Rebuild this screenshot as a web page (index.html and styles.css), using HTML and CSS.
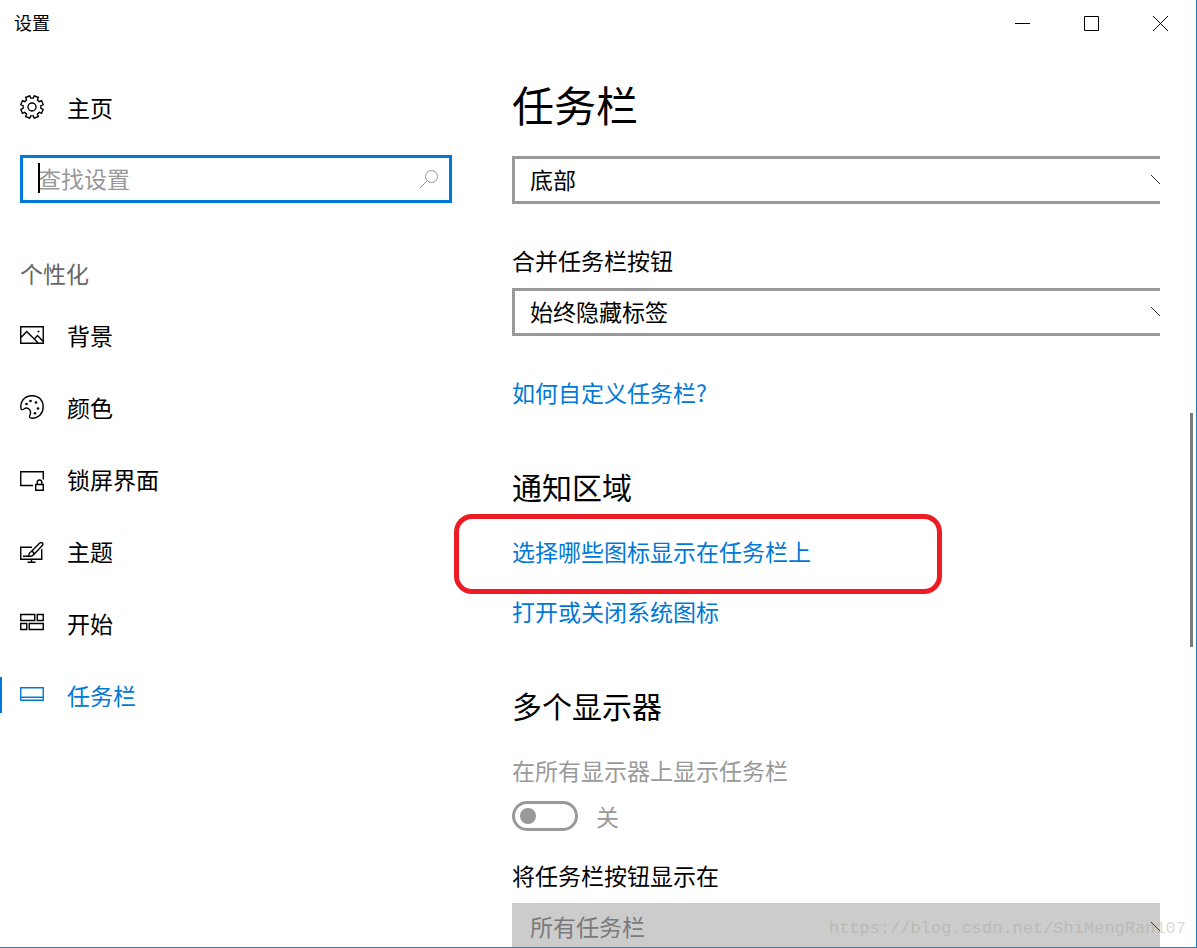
FILE: index.html
```html
<!DOCTYPE html>
<html lang="zh-CN">
<head>
	<meta charset="UTF-8">
	<meta name="viewport" content="width=device-width, initial-scale=1">
	<title>设置</title>
	<link rel="stylesheet" href="styles.css">
</head>
<body>
<div class="window">
	<header class="titlebar">
		<span class="titlebar-text">设置</span>
		<div class="window-buttons">
			<button type="button" aria-label="最小化">
				<svg width="15" height="15" viewBox="0 0 15 15"><path d="M0 7.5h15"/></svg>
			</button>
			<button type="button" aria-label="最大化">
				<svg width="15" height="15" viewBox="0 0 15 15"><path d="M.5 .5h14v14H.5z"/></svg>
			</button>
			<button type="button" aria-label="关闭">
				<svg width="15" height="15" viewBox="0 0 15 15"><path d="M0 0l15 15M15 0L0 15"/></svg>
			</button>
		</div>
	</header>

	<div class="panes">
		<aside class="sidebar">
			<a class="nav-item home" href="#">
				<svg class="icon" viewBox="0 0 24 24">
					<circle cx="12" cy="12" r="4"/>
					<path d="M13.3 3.1L14.3 .8 18.3 2.5 17.4 4.8 19.2 6.6 21.5 5.7 23.2 9.7 20.9 10.7V13.3L23.2 14.3 21.5 18.3 19.2 17.4 17.4 19.2 18.3 21.5 14.3 23.2 13.3 20.9H10.7L9.7 23.2 5.7 21.5 6.6 19.2 4.8 17.4 2.5 18.3 .8 14.3 3.1 13.3V10.7L.8 9.7 2.5 5.7 4.8 6.6 6.6 4.8 5.7 2.5 9.7 .8 10.7 3.1z"/>
				</svg>
				主页
			</a>
			<div class="search">
				<input type="text" placeholder="查找设置" aria-label="查找设置">
				<span class="caret"></span>
				<svg class="search-icon" viewBox="0 0 20 20"><circle cx="12.5" cy="7.5" r="6"/><path d="M8 12L1 19"/></svg>
			</div>
			<h2 class="group">个性化</h2>
			<nav>
				<a class="nav-item" href="#">
					<svg class="icon" viewBox="0 0 24 24">
						<path d="M.75 3.75h22.5v16.5H.75zM1 14.5l5.7-6 11.8 11.8M14.8 15.5l2.7-3 5.7 6"/>
						<circle class="dot" cx="18.5" cy="8.5" r="1"/>
					</svg>
					背景
				</a>
				<a class="nav-item" href="#">
					<svg class="icon" viewBox="0 0 24 24">
						<path d="M1.2 14.3C-.8 7 4.5 .8 12 .8S23.2 5.8 23.2 12 18.5 23.2 12 23.2C9.2 23.2 9.2 21.5 10 20 11.5 16.5 9.5 13 6.5 13 4 13 3.2 15.8 1.2 14.3z"/>
						<circle class="dot" cx="6.5" cy="9" r="1.3"/>
						<circle class="dot" cx="10.5" cy="6" r="1.3"/>
						<circle class="dot" cx="16" cy="7.5" r="1.3"/>
						<circle class="dot" cx="18" cy="13.5" r="1.3"/>
						<circle class="dot" cx="15" cy="18.3" r="1.3"/>
					</svg>
					颜色
				</a>
				<a class="nav-item" href="#">
					<svg class="icon" viewBox="0 0 24 24">
						<path d="M13 18.5H.75V4.7h22.5v7.8M15.7 17.5h7.6v5.7h-7.6zM17.2 17.5v-2.2a2.3 2.3 0 0 1 4.6 0v2.2"/>
					</svg>
					锁屏界面
				</a>
				<a class="nav-item" href="#">
					<svg class="icon" viewBox="0 0 24 24">
						<path d="M12 8.3H.75v12h21V10M7.5 23.3h8M11.5 20.3v3M3 17.3h7.5c2.5-.3 3.7-2 3-3.8M8 17c1.500-1 .7-3 2.500-4 1-.6 2.300-.3 3 .5s.8 1.600.3 2.300M11.300 12.500L19.500 4.300c2-2 4.700.2 2.800 2.300L14.300 15"/>
					</svg>
					主题
				</a>
				<a class="nav-item" href="#">
					<svg class="icon" viewBox="0 0 24 24">
						<path d="M.75 3.5h14v6H.75zM17.25 3.5h6v6h-6zM.75 12.5h6v6h-6zM9.25 12.5h14v6h-14z"/>
					</svg>
					开始
				</a>
				<a class="nav-item active" href="#">
					<svg class="icon" viewBox="0 0 24 24">
						<path d="M.75 4.75h22.5v12.5H.75zM.75 14.2h22.5"/>
					</svg>
					任务栏
				</a>
			</nav>
		</aside>

		<main class="content">
			<h1>任务栏</h1>
			<div class="select-box">
				<select aria-label="任务栏在屏幕上的位置"><option>底部</option></select>
				<svg class="chevron" viewBox="0 0 18 10"><path d="M0 0l9 9 9-9"/></svg>
			</div>

			<label class="field-label" for="combine">合并任务栏按钮</label>
			<div class="select-box">
				<select id="combine"><option>始终隐藏标签</option></select>
				<svg class="chevron" viewBox="0 0 18 10"><path d="M0 0l9 9 9-9"/></svg>
			</div>
			<p class="help"><a href="#">如何自定义任务栏?</a></p>

			<h2>通知区域</h2>
			<p class="highlighted"><a href="#">选择哪些图标显示在任务栏上</a></p>
			<p><a href="#">打开或关闭系统图标</a></p>

			<h2>多个显示器</h2>
			<label class="toggle-label" for="all-displays">在所有显示器上显示任务栏</label>
			<div class="toggle-row">
				<input class="toggle" type="checkbox" id="all-displays" disabled>
				<span>关</span>
			</div>
			<label class="field-label show-on" for="show-on">将任务栏按钮显示在</label>
			<div class="select-box">
				<select id="show-on" disabled><option>所有任务栏</option></select>
				<svg class="chevron" viewBox="0 0 18 10"><path d="M0 0l9 9 9-9"/></svg>
			</div>
		</main>
	</div>

	<div class="scrollbar"></div>
	<span class="watermark">https://blog.csdn.net/ShiMengRan107</span>
</div>
</body>
</html>
```
FILE: styles.css
```css
*, *::before, *::after {
	box-sizing: border-box;
}
body {
	margin: 0;
	font-family: "Noto Sans CJK SC", sans-serif;
	font-weight: 400;
	font-size: 23px;
	line-height: 32px;
	color: #000;
	background: #fff;
}
h1, h2, p {
	margin: 0;
	font-weight: inherit;
}
a {
	color: #0078d7;
	text-decoration: none;
}
svg {
	fill: none;
	stroke: currentColor;
}
input, select, button {
	font: inherit;
	color: inherit;
}

.window {
	position: relative;
	display: flex;
	flex-direction: column;
	height: 100vh;
	overflow: hidden;
	border: solid #1883d7;
	border-width: 0 1px 1px 0;
}

/* title bar */
.titlebar {
	display: flex;
	justify-content: space-between;
	align-items: center;
	flex: none;
	height: 47px;
	padding: 0 1px 0 14px;
	font-size: 18px;
}
.titlebar-text {
	padding-bottom: 3px;
}
.window-buttons {
	display: flex;
	align-self: stretch;
}
.window-buttons button {
	display: flex;
	align-items: center;
	justify-content: center;
	width: 69px;
	padding: 0;
	border: none;
	background: none;
}

.panes {
	display: flex;
	flex: 1;
	min-height: 0;
}

/* sidebar */
.sidebar {
	flex: none;
	width: 452px;
	padding-top: 24px;
}
.nav-item {
	position: relative;
	display: flex;
	align-items: center;
	gap: 23px;
	height: 72px;
	padding-left: 20px;
	color: #000;
}
.nav-item.active {
	color: #0078d7;
}
.nav-item.active::before {
	content: "";
	position: absolute;
	left: 0;
	width: 2px;
	height: 36px;
	background: #0078d7;
}
.icon {
	width: 24px;
	height: 24px;
	stroke-width: 1.4;
}
.dot {
	fill: currentColor;
	stroke: none;
}
.search {
	position: relative;
	margin: 12px 0 46px 20px;
}
.search input {
	display: block;
	width: 100%;
	height: 48px;
	padding: 0 48px 3px 15px;
	border: 3px solid #0078d7;
	outline: none;
}
.search input::placeholder {
	color: #999;
}
.caret {
	position: absolute;
	top: 8px;
	left: 18px;
	width: 2px;
	height: 30px;
	background: #000;
}
.search-icon {
	position: absolute;
	top: 14px;
	right: 13px;
	width: 20px;
	height: 20px;
	color: #999;
}
.group {
	margin-bottom: 2px;
	padding-left: 20px;
	font-size: 23px;
	line-height: 48px;
	color: #666;
}

/* settings pane */
.content {
	flex: 1;
	min-width: 0;
	margin-right: 36px;
	padding: 24px 0 0 60px;
	overflow: hidden;
}
h1 {
	margin-bottom: 19px;
	font-size: 42px;
	line-height: 66px;
}
.content h2 {
	margin: 58px 0 29px;
	font-size: 30px;
	line-height: 40px;
}
.content p {
	margin-top: 28px;
}
.content .help {
	margin-top: 40px;
}
.field-label {
	display: block;
	margin: 40px 0 12px;
}
.field-label.show-on {
	margin-top: 27px;
}
/* wider than the pane, so the right edge is cut off */
.select-box {
	position: relative;
	margin-right: -24px;
}
select {
	display: block;
	appearance: none;
	width: 100%;
	height: 48px;
	padding: 0 15px 3px;
	border: 3px solid #999;
	border-radius: 0;
	background: #fff;
}
select:disabled {
	border-color: #ccc;
	background: #ccc;
	color: #7a7a7a;
	opacity: 1;
}
.chevron {
	position: absolute;
	top: 19px;
	right: 15px;
	width: 18px;
	height: 10px;
	color: #333;
	pointer-events: none;
}
.highlighted {
	position: relative;
}
.highlighted::after {
	content: "";
	position: absolute;
	top: -21px;
	left: -58px;
	width: 488px;
	height: 80px;
	border: 5px solid #ed1c24;
	border-radius: 18px;
	pointer-events: none;
}
.toggle-label {
	display: block;
	color: #999;
}
.toggle-row {
	display: flex;
	align-items: center;
	gap: 18px;
	margin-top: 14px;
	color: #999;
}
.toggle {
	appearance: none;
	width: 66px;
	height: 30px;
	margin: 0;
	border: 3px solid #999;
	border-radius: 15px;
}
.toggle::before {
	content: "";
	display: block;
	width: 16px;
	height: 16px;
	margin: 4px 5px;
	border-radius: 50%;
	background: #999;
}

.scrollbar {
	position: absolute;
	top: 413px;
	right: 3px;
	width: 3px;
	height: 234px;
	background: #7a7a7a;
}
.watermark {
	position: absolute;
	right: 10px;
	bottom: 2px;
	font-family: "Liberation Mono", monospace;
	font-size: 17px;
	color: rgba(160, 160, 140, 0.4);
}
```
